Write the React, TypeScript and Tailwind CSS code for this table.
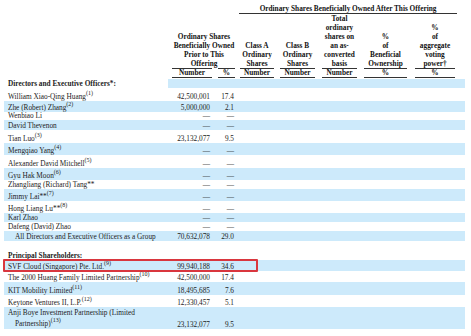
import type { ReactNode } from "react";

const SHADE = "bg-[#cdeafb]";

type Row = {
  label: ReactNode;
  num?: string;
  pct?: string;
  h: string;
  shade?: boolean;
  indent?: boolean;
  boxed?: boolean;
};

const Sup = ({ n }: { n: string }) => (
  <span className="relative -top-[4px] text-[6px] leading-none">({n})</span>
);

const directors: Row[] = [
  { label: <>William Xiao-Qing Huang<Sup n="1" /></>, num: "42,500,001", pct: "17.4", h: "h-[13px]" },
  { label: <>Zhe (Robert) Zhang<Sup n="2" /></>, num: "5,000,000", pct: "2.1", h: "h-[11px]", shade: true },
  { label: "Wenbiao Li", num: "—", pct: "—", h: "h-[8px]" },
  { label: "David Thevenon", num: "—", pct: "—", h: "h-[10px]", shade: true },
  { label: <>Tian Luo<Sup n="3" /></>, num: "23,132,077", pct: "9.5", h: "h-[13px]" },
  { label: <>Mengqiao Yang<Sup n="4" /></>, num: "—", pct: "—", h: "h-[12px]", shade: true },
  { label: <>Alexander David Mitchell<Sup n="5" /></>, num: "—", pct: "—", h: "h-[13px]" },
  { label: <>Gyu Hak Moon<Sup n="6" /></>, num: "—", pct: "—", h: "h-[12px]", shade: true },
  { label: "Zhangliang (Richard) Tang**", num: "—", pct: "—", h: "h-[9px]" },
  { label: <>Jimmy Lai**<Sup n="7" /></>, num: "—", pct: "—", h: "h-[12px]", shade: true },
  { label: <>Hong Liang Lu**<Sup n="8" /></>, num: "—", pct: "—", h: "h-[12px]" },
  { label: "Karl Zhao", num: "—", pct: "—", h: "h-[9px]", shade: true },
  { label: "Dafeng (David) Zhao", num: "—", pct: "—", h: "h-[9px]" },
  { label: "All Directors and Executive Officers as a Group", num: "70,632,078", pct: "29.0", h: "h-[10px]", shade: true, indent: true },
];

const holders: Row[] = [
  { label: <>SVF Cloud (Singapore) Pte. Ltd.<Sup n="9" /></>, num: "99,940,188", pct: "34.6", h: "h-[11px]", shade: true, boxed: true },
  { label: <>The 2000 Huang Family Limited Partnership<Sup n="10" /></>, num: "42,500,000", pct: "17.4", h: "h-[11px]" },
  { label: <>KIT Mobility Limited<Sup n="11" /></>, num: "18,495,685", pct: "7.6", h: "h-[13px]", shade: true },
  { label: <>Keytone Ventures II, L.P.<Sup n="12" /></>, num: "12,330,457", pct: "5.1", h: "h-[12px]" },
  {
    label: (
      <>
        <div className="leading-[10px]">Anji Boye Investment Partnership (Limited</div>
        <div className="pl-[7px] leading-[11px]">Partnership)<Sup n="13" /></div>
      </>
    ),
    num: "23,132,077",
    pct: "9.5",
    h: "h-[22px]",
    shade: true,
  },
];

function DataRow({ r }: { r: Row }) {
  return (
    <div className={`relative ml-[4px] flex w-[461px] leading-[9px] ${r.h} ${r.shade ? SHADE : ""}`}>
      <div className={`w-[164px] self-end whitespace-nowrap ${r.indent ? "pl-[11px]" : "pl-[4px]"}`}>
        {r.label}
      </div>
      <div className="w-[44px] self-end pr-[2px] text-right">{r.num}</div>
      <div className="w-[24px] self-end pr-[2px] text-right">{r.pct}</div>
      {r.boxed && (
        <div className="absolute -left-[1px] -top-[1px] h-[13px] w-[255px] rounded-[1px] border-2 border-[#d9363e]" />
      )}
    </div>
  );
}

function SubHead({ lines, unit, cls }: { lines: string[]; unit: string; cls: string }) {
  return (
    <div className={`flex flex-col ${cls}`}>
      <div className="text-center leading-[9px]">
        {lines.map((l) => (
          <div key={l} className="whitespace-nowrap">{l}</div>
        ))}
      </div>
      <div className="h-[10px] border-y border-[#333] text-center leading-[8px]">{unit}</div>
    </div>
  );
}

export default function App() {
  return (
    <div className="h-[336px] w-[471px] overflow-hidden bg-white font-['Liberation_Serif',serif] text-[7.3px] text-[#1c1c1c]">
      {/* header */}
      <div className="ml-[4px] flex h-[79px] w-[461px] items-end pb-[1px] font-bold text-[#111]">
        <div className="w-[164px]" />
        <div className="flex w-[72px] flex-col">
          <div className="text-center leading-[9px]">
            <div>Ordinary Shares</div>
            <div>Beneficially Owned</div>
            <div>Prior to This</div>
            <div>Offering</div>
          </div>
          <div className="flex">
            <div className="ml-[4px] h-[10px] w-[40px] border-y border-[#333] text-center leading-[8px]">Number</div>
            <div className="ml-[6px] h-[10px] w-[17px] border-y border-[#333] text-center leading-[8px]">%</div>
          </div>
        </div>
        <div className="ml-[-1px] flex w-[218px] flex-col">
          <div className="border-b border-[#333] text-center leading-[9px]">
            Ordinary Shares Beneficially Owned After This Offering
          </div>
          <div className="flex items-end">
            <SubHead cls="ml-[1px] w-[34px]" lines={["Class A", "Ordinary", "Shares"]} unit="Number" />
            <SubHead cls="ml-[6px] w-[35px]" lines={["Class B", "Ordinary", "Shares"]} unit="Number" />
            <SubHead
              cls="ml-[7px] w-[35px]"
              lines={["Total", "ordinary", "shares on", "an as-", "converted", "basis"]}
              unit="Number"
            />
            <SubHead cls="ml-[7px] w-[43px]" lines={["%", "of", "Beneficial", "Ownership"]} unit="%" />
            <SubHead cls="ml-[8px] w-[40px]" lines={["% ", "of ", "aggregate", "voting", "power†"]} unit="%" />
          </div>
        </div>
      </div>

      {/* directors heading */}
      <div className="ml-[4px] flex h-[9px] w-[461px] leading-[9px]">
        <div className="w-[164px] whitespace-nowrap pl-[4px] font-bold">Directors and Executive Officers*:</div>
        <div className={`flex-1 ${SHADE}`} />
      </div>
      {directors.map((r, i) => (
        <DataRow key={i} r={r} />
      ))}

      <div className="h-[11px]" />
      <div className="ml-[4px] flex h-[8px] items-end pl-[4px] font-bold leading-[9px]">Principal Shareholders:</div>
      {holders.map((r, i) => (
        <DataRow key={i} r={r} />
      ))}
    </div>
  );
}
